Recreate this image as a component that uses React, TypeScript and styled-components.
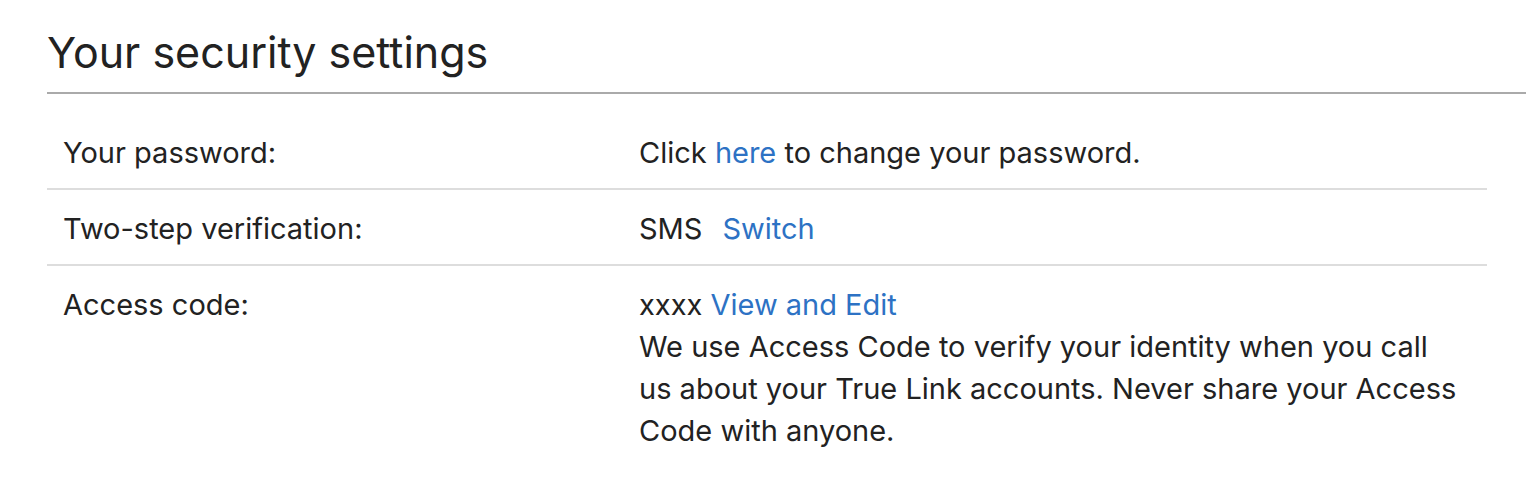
import React from "react";
import styled, { createGlobalStyle } from "styled-components";

const GlobalStyle = createGlobalStyle`
  html, body { margin: 0; padding: 0; background: #ffffff; }
  body { font-family: Inter, "Liberation Sans", Arial, sans-serif; color: #222222; }
`;

const Page = styled.main`
  padding: 26px 0 0 47px;
`;

const Title = styled.h1`
  margin: 0;
  padding: 0 0 14px 0;
  font-size: 43px;
  font-weight: 400;
  line-height: 52px;
  color: #222222;
  border-bottom: 2px solid #aaaaaa;
`;

const Table = styled.table`
  width: 1440px;
  margin-top: 20px;
  border-collapse: collapse;
  font-size: 29px;
  line-height: 42px;
`;

const Row = styled.tr<{ $last?: boolean }>`
  border-bottom: ${(p) => (p.$last ? "none" : "2px solid #dddddd")};
`;

const Label = styled.td`
  width: 40%;
  padding: 18px 16px 14px;
  vertical-align: top;
`;

const Value = styled.td`
  padding: 18px 16px 14px;
  vertical-align: top;
`;

const Description = styled.p`
  margin: 0;
  max-width: 824px;
`;

const Link = styled.a`
  color: #2d72c4;
  text-decoration: none;
`;

const Gap = styled.span`
  display: inline-block;
  width: 20px;
`;

export default function App() {
  return (
    <>
      <GlobalStyle />
      <Page>
        <Title>Your security settings</Title>
        <Table>
          <tbody>
            <Row>
              <Label>Your password:</Label>
              <Value>
                Click <Link href="#">here</Link> to change your password.
              </Value>
            </Row>
            <Row>
              <Label>Two-step verification:</Label>
              <Value>
                SMS<Gap />
                <Link href="#">Switch</Link>
              </Value>
            </Row>
            <Row $last>
              <Label>Access code:</Label>
              <Value>
                xxxx <Link href="#">View and Edit</Link>
                <Description>
                  We use Access Code to verify your identity when you call us about your True Link
                  accounts. Never share your Access Code with anyone.
                </Description>
              </Value>
            </Row>
          </tbody>
        </Table>
      </Page>
    </>
  );
}
